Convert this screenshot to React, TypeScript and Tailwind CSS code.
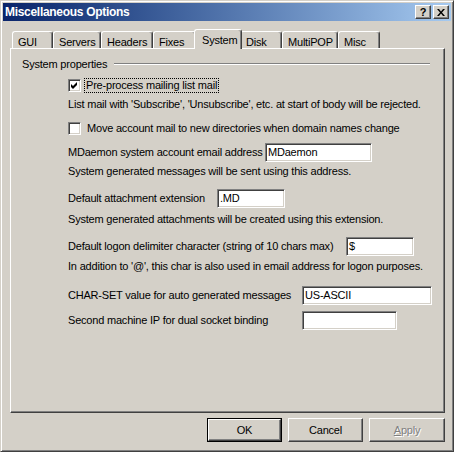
import React from "react";

const raised =
  "border border-t-white border-l-white border-b-[#404040] border-r-[#404040] shadow-[inset_-1px_-1px_0_#808080,inset_1px_1px_0_#d4d0c8]";
const sunken =
  "border border-t-[#808080] border-l-[#808080] border-b-white border-r-white shadow-[inset_1px_1px_0_#404040,inset_-1px_-1px_0_#d4d0c8]";

interface Tab {
  label: string;
  width: string;
  selected?: boolean;
}

const tabs: Tab[] = [
  { label: "GUI", width: "w-[41px]" },
  { label: "Servers", width: "w-[48px]" },
  { label: "Headers", width: "w-[52px]" },
  { label: "Fixes", width: "w-[43px]" },
  { label: "System", width: "w-[48px]", selected: true },
  { label: "Disk", width: "w-[42px]" },
  { label: "MultiPOP", width: "w-[56px]" },
  { label: "Misc", width: "w-[42px]" },
];

const Checkbox: React.FC<{ checked?: boolean }> = ({ checked }) => (
  <div className={`w-[13px] h-[13px] bg-white shrink-0 flex items-center justify-center ${sunken}`}>
    {checked && (
      <svg width="7" height="7" viewBox="0 0 7 7">
        <path d="M0 2 L2 4 L6 0 L6 3 L2 7 L0 5 Z" fill="#000" />
      </svg>
    )}
  </div>
);

const TextBox: React.FC<{ value?: string; width: string }> = ({ value, width }) => (
  <div className={`h-[19px] ${width} shrink-0 bg-white ${sunken} px-[2px] leading-[17px] whitespace-nowrap`}>
    {value}
  </div>
);

const Note: React.FC<{ text: string; mt: string }> = ({ text, mt }) => (
  <div className={`${mt} h-[14px] leading-[14px] pl-[57px] whitespace-nowrap`}>{text}</div>
);

const Field: React.FC<{ label: string; labelWidth: string; value?: string; width: string; mt: string }> = ({
  label,
  labelWidth,
  value,
  width,
  mt,
}) => (
  <div className={`${mt} flex items-center pl-[57px] h-[19px]`}>
    <span className={`${labelWidth} shrink-0 whitespace-nowrap`}>{label}</span>
    <TextBox value={value} width={width} />
  </div>
);

export default function App() {
  return (
    <div
      className="w-[454px] h-[452px] bg-[#d4d0c8] p-[2px] text-black text-[11px] tracking-[-0.2px] flex flex-col border border-t-[#d4d0c8] border-l-[#d4d0c8] border-b-[#404040] border-r-[#404040] shadow-[inset_1px_1px_0_white,inset_-1px_-1px_0_#808080]"
      style={{ fontFamily: '"Liberation Sans", Arial, sans-serif' }}
    >
      {/* title bar */}
      <div className="h-[18px] bg-gradient-to-r from-[#0a246a] to-[#a6caf0] flex items-center pl-[2px] pr-[2px]">
        <span className="text-white font-bold text-[12px] tracking-[-0.3px] flex-1 whitespace-nowrap">
          Miscellaneous Options
        </span>
        <div className={`w-[16px] h-[14px] bg-[#d4d0c8] ${raised} flex items-center justify-center font-bold text-[11px] leading-none`}>
          ?
        </div>
        <div className={`ml-[2px] w-[16px] h-[14px] bg-[#d4d0c8] ${raised} flex items-center justify-center`}>
          <svg width="8" height="7" viewBox="0 0 8 7">
            <path d="M0 0h2l2 2.5L6 0h2L5 3.5 8 7H6L4 4.5 2 7H0l3-3.5z" fill="#000" />
          </svg>
        </div>
      </div>

      {/* tab strip */}
      <div className="mt-[8px] ml-[7px] mr-[6px] h-[19px] flex items-end pl-[2px] relative z-10">
        {tabs.map((t) =>
          t.selected ? (
            <div
              key={t.label}
              className={`${t.width} -mx-[2px] h-[20px] -mb-[1px] bg-[#d4d0c8] border-t border-l border-white border-r border-r-[#404040] rounded-t-[3px] shadow-[inset_-1px_0_0_#808080] pl-[7px] pt-[2px] z-10 whitespace-nowrap`}
            >
              {t.label}
            </div>
          ) : (
            <div
              key={t.label}
              className={`${t.width} h-[17px] bg-[#d4d0c8] border-t border-l border-white border-r border-r-[#404040] rounded-t-[3px] shadow-[inset_-1px_0_0_#808080] pl-[5px] pt-[2px] whitespace-nowrap`}
            >
              {t.label}
            </div>
          )
        )}
      </div>

      {/* panel */}
      <div className="ml-[7px] mr-[6px] h-[365px] border border-t-white border-l-white border-b-[#404040] border-r-[#404040] shadow-[inset_-1px_-1px_0_#808080] flex flex-col">
        <div className="mt-[8px] h-[14px] flex items-center pl-[11px] pr-[14px]">
          <span className="leading-[14px] whitespace-nowrap">System properties</span>
          <div className="ml-[7px] flex-1 h-[2px] border-t border-t-[#808080] border-b border-b-white" />
        </div>

        <div className="mt-[6px] h-[16px] flex items-center pl-[57px]">
          <Checkbox checked />
          <span className="ml-[3px] px-[1px] h-[15px] leading-[13px] border border-dotted border-black whitespace-nowrap">
            Pre-process mailing list mail
          </span>
        </div>
        <Note mt="mt-[4px]" text="List mail with 'Subscribe', 'Unsubscribe', etc. at start of body will be rejected." />

        <div className="mt-[9px] h-[16px] flex items-center pl-[57px]">
          <Checkbox />
          <span className="ml-[6px] whitespace-nowrap">Move account mail to new directories when domain names change</span>
        </div>

        <Field mt="mt-[7px]" label="MDaemon system account email address" labelWidth="w-[197px]" value="MDaemon" width="w-[107px]" />
        <Note mt="mt-[2px]" text="System generated messages will be sent using this address." />

        <Field mt="mt-[11px]" label="Default attachment extension" labelWidth="w-[149px]" value=".MD" width="w-[68px]" />
        <Note mt="mt-[4px]" text="System generated attachments will be created using this extension." />

        <Field mt="mt-[11px]" label="Default logon delimiter character (string of 10 chars max)" labelWidth="w-[278px]" value="$" width="w-[68px]" />
        <Note mt="mt-[3px]" text="In addition to '@', this char is also used in email address for logon purposes." />

        <Field mt="mt-[13px]" label="CHAR-SET value for auto generated messages" labelWidth="w-[234px]" value="US-ASCII" width="w-[130px]" />
        <Field mt="mt-[6px]" label="Second machine IP for dual socket binding" labelWidth="w-[234px]" width="w-[95px]" />
      </div>

      {/* buttons */}
      <div className="mt-[5px] mr-[6px] flex justify-end gap-[6px]">
        <div className="w-[75px] h-[24px] border border-black">
          <div className={`w-full h-full ${raised} flex items-center justify-center`}>OK</div>
        </div>
        <div className={`w-[75px] h-[24px] ${raised} flex items-center justify-center`}>Cancel</div>
        <div className={`w-[76px] h-[24px] ${raised} flex items-center justify-center text-[#808080] [text-shadow:1px_1px_0_white]`}>
          <span>
            <span className="underline">A</span>pply
          </span>
        </div>
      </div>
    </div>
  );
}
